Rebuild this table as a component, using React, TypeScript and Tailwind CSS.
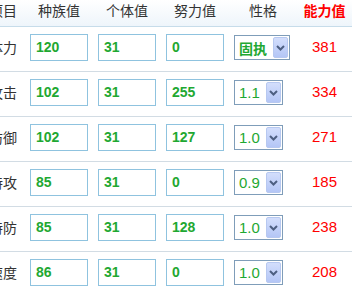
const rows = [
  { name: '体力', base: '120', iv: '31', ev: '0', nature: '固执', total: '381' },
  { name: '攻击', base: '102', iv: '31', ev: '255', nature: '1.1', total: '334' },
  { name: '防御', base: '102', iv: '31', ev: '127', nature: '1.0', total: '271' },
  { name: '特攻', base: '85', iv: '31', ev: '0', nature: '0.9', total: '185' },
  { name: '特防', base: '85', iv: '31', ev: '128', nature: '1.0', total: '238' },
  { name: '速度', base: '86', iv: '31', ev: '0', nature: '1.0', total: '208' },
];

function NumBox({ value }: { value: string }) {
  return (
    <div className="w-[58px] h-[27px] border border-[#8fc3df] bg-white pl-[5px] flex items-center text-[14px] font-bold text-[#1fa832] font-['Liberation_Sans',sans-serif]">
      {value}
    </div>
  );
}

function NatureSelect({ value }: { value: string }) {
  const cjk = /[^\d.]/.test(value);
  return (
    <div className="inline-flex items-center h-[25px] border border-[#7f9db9] bg-white pl-[4px] pr-[1px]">
      <span
        className={
          cjk
            ? "text-[14px] font-bold text-[#1fa832] font-['Noto_Sans_CJK_SC',sans-serif] leading-none"
            : "text-[15px] text-[#1fa832] font-['Liberation_Sans',sans-serif] leading-none"
        }
      >
        {value}
      </span>
      <span className="ml-[6px] w-[15px] h-[21px] rounded-[2px] border border-[#b7c8f0] bg-gradient-to-b from-[#d3defc] to-[#b4c6f6] flex items-center justify-center">
        <svg width="9" height="6" viewBox="0 0 9 6">
          <path d="M1 1 L4.5 4.5 L8 1" fill="none" stroke="#4d5f82" strokeWidth="2" />
        </svg>
      </span>
    </div>
  );
}

export default function App() {
  return (
    <div className="w-[352px] h-[288px] overflow-hidden bg-white font-['Noto_Sans_CJK_SC',sans-serif]">
      <div className="ml-[-19px] w-[371px]">
        {/* header */}
        <div className="flex h-[27px] border-b border-[#c6dcea] bg-gradient-to-b from-white to-[#eef5fb] text-[14px] text-[#333] leading-[20px]">
          <div className="w-[44px] text-center">项目</div>
          <div className="w-[68px] text-center">种族值</div>
          <div className="w-[68px] text-center">个体值</div>
          <div className="w-[68px] text-center">努力值</div>
          <div className="w-[68px] text-center">性格</div>
          <div className="w-[55px] text-center font-bold text-[#f00]">能力值</div>
        </div>
        {rows.map((r) => (
          <div key={r.name} className="flex h-[45px] border-b border-[#d2dce4] pt-[7px]">
            <div className="w-[44px] h-[27px] flex items-center justify-center text-[14px] text-[#333]">{r.name}</div>
            <div className="w-[68px] pl-[5px]"><NumBox value={r.base} /></div>
            <div className="w-[68px] pl-[5px]"><NumBox value={r.iv} /></div>
            <div className="w-[68px] pl-[5px]"><NumBox value={r.ev} /></div>
            <div className="w-[68px] pl-[5px] h-[27px] flex items-center"><NatureSelect value={r.nature} /></div>
            <div className="w-[55px] h-[27px] flex items-center justify-center text-[15px] text-[#f00] font-['Liberation_Sans',sans-serif]">{r.total}</div>
          </div>
        ))}
      </div>
    </div>
  );
}
